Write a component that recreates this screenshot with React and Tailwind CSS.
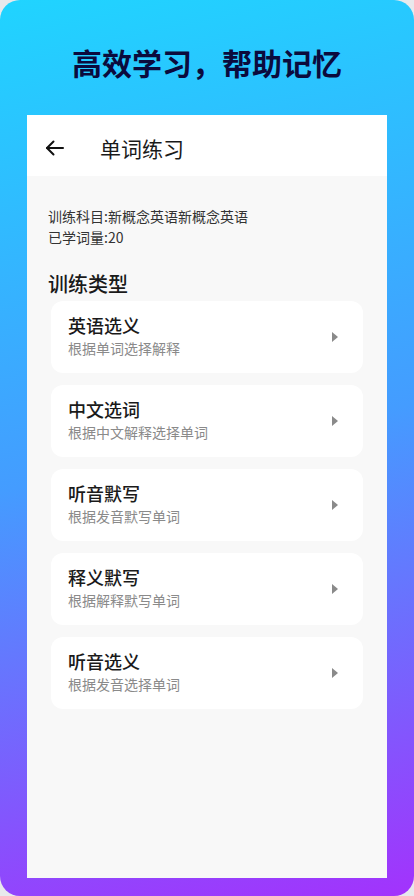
import React from "react";

const items = [
  ["英语选义", "根据单词选择解释"],
  ["中文选词", "根据中文解释选择单词"],
  ["听音默写", "根据发音默写单词"],
  ["释义默写", "根据解释默写单词"],
  ["听音选义", "根据发音选择单词"],
];

export default function App() {
  return (
    <div
      className="w-[414px] h-[896px] bg-[#e8e9ec]"
      style={{ fontFamily: '"Noto Sans CJK SC", "Noto Sans", sans-serif' }}
    >
      <div className="w-full h-full rounded-[20px] bg-linear-[168deg] from-[#20d4ff] via-[#449cff] to-[#a332fc] flex flex-col items-center">
        <h1 className="pt-[42px] text-[30px] leading-[40px] font-bold text-[#0b0b3d]">
          高效学习，帮助记忆
        </h1>
        <div className="mt-[33px] w-[360px] flex-1 mb-[18px] bg-[#f8f8f8] flex flex-col">
          <div className="h-[61px] bg-white flex items-center shrink-0">
            <svg
              className="ml-[16px] mt-[4px]"
              width="24"
              height="24"
              viewBox="0 0 24 24"
              fill="none"
              stroke="#111"
              strokeWidth="2"
              strokeLinecap="round"
              strokeLinejoin="round"
            >
              <path d="M20 12H4" />
              <path d="M10.5 5.5L4 12l6.5 6.5" />
            </svg>
            <span className="ml-[33px] mt-[4px] text-[21px] leading-[28px] text-[#1a1a1a]">
              单词练习
            </span>
          </div>
          <div className="pt-[30px] pl-[21px] text-[14px] leading-[21px] text-[#333]">
            <div>训练科目:新概念英语新概念英语</div>
            <div>已学词量:20</div>
          </div>
          <div className="mt-[22px] pl-[21px] text-[20px] leading-[28px] font-medium text-[#1a1a1a]">
            训练类型
          </div>
          <div className="mt-[3px] px-[24px] flex flex-col gap-[12px]">
            {items.map(([t, s]) => (
              <div
                key={t}
                className="h-[72px] bg-white rounded-[12px] flex items-center justify-between pl-[17px] pr-[25px]"
              >
                <div className="flex flex-col self-start pt-[12px]">
                  <span className="text-[18px] leading-[24px] font-medium text-[#1a1a1a]">
                    {t}
                  </span>
                  <span className="text-[14px] leading-[20px] text-[#8a8a8a] mt-[1px]">
                    {s}
                  </span>
                </div>
                <svg width="6" height="10" viewBox="0 0 6 10">
                  <path d="M0 0L6 5L0 10Z" fill="#8a8a8a" />
                </svg>
              </div>
            ))}
          </div>
        </div>
      </div>
    </div>
  );
}
